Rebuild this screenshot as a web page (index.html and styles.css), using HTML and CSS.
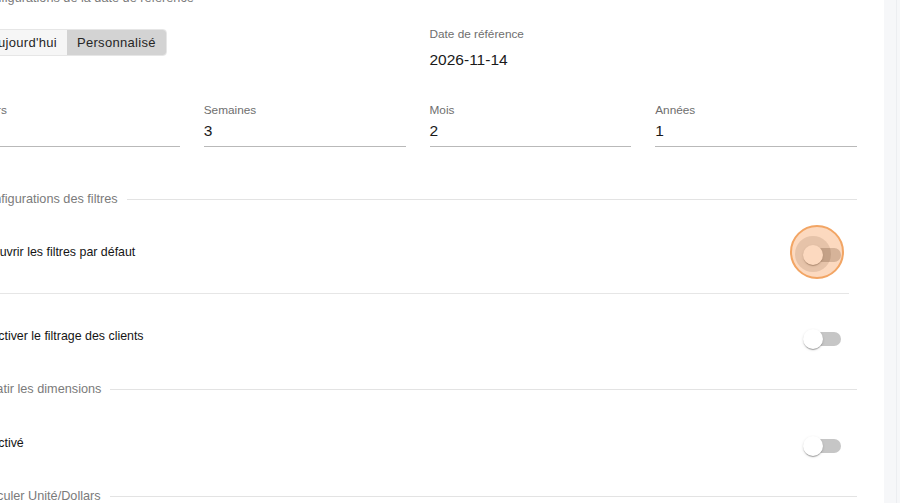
FILE: index.html
```html
<!DOCTYPE html>
<html lang="fr">
<head>
<meta charset="utf-8">
<title>Configurations</title>
<link rel="stylesheet" href="styles.css">
</head>
<body>
<div class="app">
  <main class="main">
    <div class="content">
      <div class="section-head">
        <span class="section-title">Configurations de la date de référence</span>
        <span class="section-line"></span>
      </div>

      <div class="top-row">
        <div class="toggle-group">
          <button class="toggle">Aujourd'hui</button>
          <button class="toggle selected">Personnalisé</button>
        </div>
        <div class="field">
          <div class="field-label">Date de référence</div>
          <div class="field-value plain">2026-11-14</div>
        </div>
      </div>

      <div class="fields-row">
        <div class="field">
          <div class="field-label">Jours</div>
          <div class="field-value">0</div>
        </div>
        <div class="field">
          <div class="field-label">Semaines</div>
          <div class="field-value">3</div>
        </div>
        <div class="field">
          <div class="field-label">Mois</div>
          <div class="field-value">2</div>
        </div>
        <div class="field">
          <div class="field-label">Années</div>
          <div class="field-value">1</div>
        </div>
      </div>

      <div class="section-head">
        <span class="section-title">Configurations des filtres</span>
        <span class="section-line"></span>
      </div>
      <div class="setting-row divided">
        <span class="setting-title">Ouvrir les filtres par défaut</span>
        <span class="switch">
          <span class="switch-track"></span>
          <span class="switch-halo"></span>
          <span class="switch-thumb"></span>
          <span class="click-marker"></span>
        </span>
      </div>
      <div class="setting-row">
        <span class="setting-title">Activer le filtrage des clients</span>
        <span class="switch">
          <span class="switch-track"></span>
          <span class="switch-thumb"></span>
        </span>
      </div>

      <div class="section-head">
        <span class="section-title">Aplatir les dimensions</span>
        <span class="section-line"></span>
      </div>
      <div class="setting-row">
        <span class="setting-title">Activé</span>
        <span class="switch">
          <span class="switch-track"></span>
          <span class="switch-thumb"></span>
        </span>
      </div>

      <div class="section-head">
        <span class="section-title">Calculer Unité/Dollars</span>
        <span class="section-line"></span>
      </div>
    </div>
  </main>
  <aside class="side-strip"><span class="side-line"></span></aside>
</div>
</body>
</html>
```

FILE: styles.css
```css
* {
  box-sizing: border-box;
}

html, body {
  margin: 0;
  padding: 0;
  background: #ffffff;
}

body {
  font-family: "Liberation Sans", Arial, Helvetica, sans-serif;
  color: #222222;
}

.app {
  display: flex;
  width: 900px;
  height: 503px;
  overflow: hidden;
}

.main {
  flex: 1;
  min-width: 0;
  overflow: hidden;
  background: #ffffff;
}

.side-strip {
  width: 16px;
  flex: none;
  background: #f6f7f9;
  display: flex;
  justify-content: flex-end;
  padding-right: 3px;
}

.side-line {
  width: 1px;
  background: #eceef1;
}

.content {
  margin: -14px 27px 0 -22px;
  display: flex;
  flex-direction: column;
}

/* section header with trailing line */
.section-head {
  height: 24px;
  display: flex;
  align-items: center;
  flex: none;
}

.section-title {
  font-size: 12.7px;
  line-height: 16px;
  color: #7b7b7b;
  white-space: nowrap;
}

.section-line {
  flex: 1;
  height: 1px;
  background: #e3e3e3;
  margin-left: 9px;
  margin-top: 1px;
}

/* top row */
.top-row {
  margin-top: 17px;
  display: grid;
  grid-template-columns: 1fr 1fr;
  column-gap: 24px;
  align-items: start;
}

.toggle-group {
  margin-top: 2px;
  display: inline-flex;
  justify-self: start;
  height: 27px;
  border: 1px solid #e6e6e6;
  border-radius: 4px;
  overflow: hidden;
}

.toggle {
  border: none;
  margin: 0;
  padding: 0 10px;
  font-family: "Liberation Sans", Arial, Helvetica, sans-serif;
  font-size: 13px;
  letter-spacing: 0.3px;
  color: #262626;
  background: #f6f6f6;
  cursor: pointer;
}

.toggle.selected {
  background: #d3d3d3;
}

.field {
  display: flex;
  flex-direction: column;
  min-width: 0;
}

.field-label {
  font-size: 11.8px;
  line-height: 14px;
  color: #6e6e6e;
  white-space: nowrap;
}

.field-value {
  margin-top: 4px;
  font-size: 15.5px;
  line-height: 20px;
  color: #1a1a1a;
  padding-bottom: 5px;
  border-bottom: 1px solid #b9b9b9;
}

.field-value.plain {
  margin-top: 9px;
  border-bottom: none;
  padding-bottom: 0;
}

.fields-row {
  margin-top: 33px;
  margin-bottom: 40px;
  display: grid;
  grid-template-columns: repeat(4, 1fr);
  column-gap: 24px;
}

/* setting rows */
.setting-row {
  height: 83px;
  margin: 0 8px;
  padding: 0 8px 0 4px;
  display: flex;
  align-items: center;
  justify-content: space-between;
}

.setting-row.divided {
  border-bottom: 1px solid #e6e6e6;
}

.setting-title {
  font-size: 12.4px;
  line-height: 16px;
  color: #151515;
  white-space: nowrap;
}

/* switch */
.switch {
  position: relative;
  width: 38px;
  height: 20px;
  margin-top: 6px;
  flex: none;
}

.switch-track {
  position: absolute;
  left: 3px;
  top: 3px;
  width: 35px;
  height: 14px;
  border-radius: 7px;
  background: #c6c6c6;
}

.switch-thumb {
  position: absolute;
  left: 0;
  top: 0;
  width: 20px;
  height: 20px;
  border-radius: 50%;
  background: #ffffff;
  box-shadow: 0 2px 1px -1px rgba(0, 0, 0, 0.2),
              0 1px 1px 0 rgba(0, 0, 0, 0.14),
              0 1px 3px 0 rgba(0, 0, 0, 0.12);
}

.switch-halo {
  position: absolute;
  left: -8px;
  top: -9px;
  width: 36px;
  height: 36px;
  border-radius: 50%;
  background: rgba(0, 0, 0, 0.13);
}

.click-marker {
  position: absolute;
  left: -13px;
  top: -20px;
  width: 54px;
  height: 54px;
  border-radius: 50%;
  border: 2px solid #f2a564;
  background: rgba(247, 140, 60, 0.33);
}
```
